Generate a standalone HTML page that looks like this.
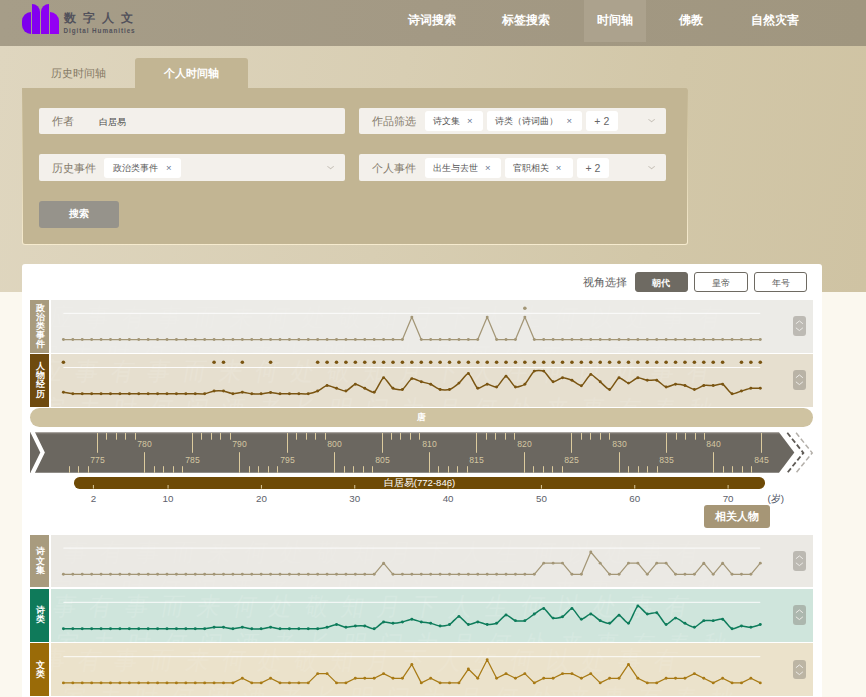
<!DOCTYPE html>
<html><head><meta charset="utf-8">
<style>
*{box-sizing:border-box;margin:0;padding:0}
html,body{width:866px;height:697px;overflow:hidden}
body{position:relative;font-family:"Liberation Sans",sans-serif;background:#fbf8ef}
.abs{position:absolute}
#bgtop{position:absolute;left:0;top:46px;width:866px;height:245.8px;background:linear-gradient(100deg,#dfd6bf 0%,#d8ceb3 45%,#d2c7a8 75%,#cfc3a3 100%)}
#hdr{position:absolute;left:0;top:0;width:866px;height:46px;background:linear-gradient(90deg,#a69d88,#a39984 50%,#a0967f)}
.lg{position:absolute;background:#8600f0}
.nav{position:absolute;top:13px;color:#fff;font-size:12px;font-weight:bold;line-height:14px;white-space:nowrap}
#navact{position:absolute;left:584px;top:0;width:62px;height:42px;background:#aca28d}
.logo-cn{position:absolute;left:63.5px;top:9.9px;font-size:12.3px;font-weight:bold;line-height:16px;color:#52515b;letter-spacing:7px;white-space:nowrap}
.logo-en{position:absolute;left:63.5px;top:27.3px;font-size:6.3px;line-height:8px;color:#52515a;letter-spacing:0.95px;font-weight:bold;white-space:nowrap}
.tab{position:absolute;top:58px;height:30px;font-size:11px;line-height:30px;text-align:center;white-space:nowrap}
#panel{position:absolute;left:22px;top:88px;width:666px;height:157px;background:linear-gradient(180deg,#c2b593 0%,#d9cdaa 40%,#f6ebcf 100%);border-radius:0 3px 3px 3px}
#panel div{position:absolute;left:1px;top:0;right:1px;bottom:1px;background:#c2b593;border-radius:0 2px 2px 2px}
.inp{position:absolute;height:26px;background:#f3f0eb;border-radius:2px}
.lab{position:absolute;font-size:11px;line-height:14px;color:#857b6b;white-space:nowrap}
.tag{position:absolute;height:20px;background:#fff;border-radius:3px;font-size:9.3px;line-height:20px;color:#555;white-space:nowrap}
.tag i{font-style:normal;position:absolute;color:#6a7690;font-size:9.5px;line-height:20px}
.arr{position:absolute;width:5.2px;height:5.2px;border-right:1px solid #c6c1b8;border-bottom:1px solid #c6c1b8;transform:scaleY(0.8) rotate(45deg)}
#card{position:absolute;left:22px;top:264px;width:800px;height:440px;background:#fff;border-radius:3px}
.rl{position:absolute;left:30px;width:19px;color:#fff;font-size:9.2px;line-height:9.1px;font-weight:bold;text-align:center;display:flex;align-items:center;justify-content:center}
.rl span{display:block;margin-left:1px}
.rb{position:absolute;left:51px;width:762px;overflow:hidden}
.cal{position:absolute;white-space:nowrap;font-size:23px;line-height:28px;letter-spacing:13px;color:#fff;opacity:0.14;transform:skewX(-10deg) scaleY(1.1);transform-origin:0 0}
.sw{position:absolute;left:793.1px;width:12.8px;height:19.8px;background:rgba(125,120,110,0.42);border-radius:3px}
.sw svg{display:block}
.btn{position:absolute;top:272px;height:19.6px;border-radius:3px;font-size:9px;font-weight:bold;line-height:20.5px;text-align:center}
svg text.yl{font-size:8.6px;fill:#d3c6a0;text-anchor:middle;font-family:"Liberation Sans",sans-serif}
svg text.al{font-size:9.8px;fill:#5d616b;text-anchor:middle;font-family:"Liberation Sans",sans-serif}
</style></head><body>
<div id="bgtop"></div>
<div id="hdr"></div>
<div class="lg" style="left:22px;top:12px;width:9px;height:22px;border-radius:9px 0 0 9px;background:#7d00ee"></div>
<div class="lg" style="left:31.8px;top:3.9px;width:8.3px;height:30px;border-radius:0 8.3px 0 0;background:#8300f0"></div>
<div class="lg" style="left:40.8px;top:3.9px;width:8.5px;height:30px;border-radius:8.5px 0 0 0;background:#8a00f2"></div>
<div class="lg" style="left:50px;top:12px;width:9px;height:22px;border-radius:0 9px 0 0;background:#9300f4"></div>
<div class="logo-cn">数字人文</div>
<div class="logo-en">Digital Humanities</div>
<div id="navact"></div>
<div class="nav" style="left:407.5px">诗词搜索</div>
<div class="nav" style="left:502.3px">标签搜索</div>
<div class="nav" style="left:596.7px">时间轴</div>
<div class="nav" style="left:679px">佛教</div>
<div class="nav" style="left:750.8px">自然灾害</div>

<div class="tab" style="left:22px;width:113px;color:#867a66">历史时间轴</div>
<div class="tab" style="left:135px;width:113px;background:#c2b593;color:#fff;font-weight:bold;border-radius:3px 3px 0 0">个人时间轴</div>
<div id="panel"><div></div></div>

<div class="inp" style="left:39px;top:108px;width:306px"></div>
<div class="lab" style="left:51.5px;top:114px">作者</div>
<div class="abs" style="left:99.3px;top:114.5px;font-size:8.8px;line-height:14px;color:#4a4a4a">白居易</div>

<div class="inp" style="left:39px;top:154.3px;width:306px;height:26.5px"></div>
<div class="lab" style="left:51.5px;top:160.5px">历史事件</div>
<div class="tag" style="left:103.9px;top:158.2px;width:77px;padding-left:8.7px">政治类事件<i style="left:62px">×</i></div>
<div class="arr" style="left:328px;top:163.8px"></div>

<div class="inp" style="left:359px;top:108px;width:307px"></div>
<div class="lab" style="left:372.3px;top:114px">作品筛选</div>
<div class="tag" style="left:425px;top:111.4px;width:57.7px;padding-left:8px">诗文集<i style="left:42px">×</i></div>
<div class="tag" style="left:487.4px;top:111.4px;width:94.2px;padding-left:8px">诗类（诗词曲）<i style="left:79px">×</i></div>
<div class="tag" style="left:586px;top:111.4px;width:31.6px;text-align:center;font-size:10.5px;color:#666">+ 2</div>
<div class="arr" style="left:649px;top:117.3px"></div>

<div class="inp" style="left:359px;top:154.3px;width:307px;height:26.5px"></div>
<div class="lab" style="left:372.3px;top:160.5px">个人事件</div>
<div class="tag" style="left:425px;top:158.3px;width:75.8px;padding-left:8px">出生与去世<i style="left:60px">×</i></div>
<div class="tag" style="left:504.8px;top:158.3px;width:67.9px;padding-left:8px">官职相关<i style="left:51px">×</i></div>
<div class="tag" style="left:577px;top:158.3px;width:31.7px;text-align:center;font-size:10.5px;color:#666">+ 2</div>
<div class="arr" style="left:649px;top:163.8px"></div>

<div class="abs" style="left:39px;top:201px;width:80px;height:26.7px;background:#96938b;border-radius:3px;color:#fff;font-size:9.5px;font-weight:bold;line-height:26.7px;text-align:center">搜索</div>

<div id="card"></div>
<div class="abs" style="left:583.3px;top:275px;font-size:11px;line-height:14px;color:#5e5e5e;white-space:nowrap">视角选择</div>
<div class="btn" style="left:635px;width:52.7px;background:#6e6a62;color:#fff;border:1px solid #6e6a62">朝代</div>
<div class="btn" style="left:694px;width:53.7px;background:#fff;color:#555;font-weight:normal;border:1px solid #6e6a62">皇帝</div>
<div class="btn" style="left:754px;width:53px;background:#fff;color:#555;font-weight:normal;border:1px solid #6e6a62">年号</div>

<div class="rl" style="top:300.0px;height:52.6px;background:#a89b7e"><span>政<br>治<br>类<br>事<br>件</span></div>
<div class="rb" style="top:300.0px;height:52.6px;background:#ecebe7"><div class="cal" style="opacity:0.06;top:2px;left:2px">应事有事而来何处敬知月下人生何以处事有</div><div class="cal" style="opacity:0.06;top:40px;left:-14px">家去时何闲酒者长明问为月何处来事有春秋</div></div>
<div class="sw" style="top:316.2px"><svg width="13" height="20" viewBox="0 0 13 20"><path d="M2.9 7.75 L6.4 4.95 L9.9 7.75 M2.9 11.8 L6.4 14.6 L9.9 11.8" fill="none" stroke="#eceae6" stroke-width="1"/></svg></div>
<div class="rl" style="top:354.2px;height:52.6px;background:#6e4a0f"><span>人<br>物<br>经<br>历</span></div>
<div class="rb" style="top:354.2px;height:52.6px;background:#e6dfcf"><div class="cal" style="opacity:0.11;top:2px;left:-9px">应事有事而来何处敬知月下人生何以处事有</div><div class="cal" style="opacity:0.11;top:40px;left:-7px">家去时何闲酒者长明问为月何处来事有春秋</div></div>
<div class="sw" style="top:370.4px"><svg width="13" height="20" viewBox="0 0 13 20"><path d="M2.9 7.75 L6.4 4.95 L9.9 7.75 M2.9 11.8 L6.4 14.6 L9.9 11.8" fill="none" stroke="#eceae6" stroke-width="1"/></svg></div>
<div class="rl" style="top:534.8px;height:52.6px;background:#a89b7e"><span>诗<br>文<br>集</span></div>
<div class="rb" style="top:534.8px;height:52.6px;background:#ebe9e4"><div class="cal" style="opacity:0.06;top:2px;left:-20px">应事有事而来何处敬知月下人生何以处事有</div><div class="cal" style="opacity:0.06;top:40px;left:0px">家去时何闲酒者长明问为月何处来事有春秋</div></div>
<div class="sw" style="top:551.0px"><svg width="13" height="20" viewBox="0 0 13 20"><path d="M2.9 7.75 L6.4 4.95 L9.9 7.75 M2.9 11.8 L6.4 14.6 L9.9 11.8" fill="none" stroke="#eceae6" stroke-width="1"/></svg></div>
<div class="rl" style="top:589.0px;height:52.6px;background:#0f7a5a"><span>诗<br>类</span></div>
<div class="rb" style="top:589.0px;height:52.6px;background:#cfe5dc"><div class="cal" style="opacity:0.12;top:2px;left:-31px">应事有事而来何处敬知月下人生何以处事有</div><div class="cal" style="opacity:0.12;top:40px;left:7px">家去时何闲酒者长明问为月何处来事有春秋</div></div>
<div class="sw" style="top:605.2px"><svg width="13" height="20" viewBox="0 0 13 20"><path d="M2.9 7.75 L6.4 4.95 L9.9 7.75 M2.9 11.8 L6.4 14.6 L9.9 11.8" fill="none" stroke="#eceae6" stroke-width="1"/></svg></div>
<div class="rl" style="top:643.4px;height:52.6px;background:#9a6b08"><span>文<br>类</span></div>
<div class="rb" style="top:643.4px;height:52.6px;background:#ebe2cb"><div class="cal" style="opacity:0.09;top:2px;left:-42px">应事有事而来何处敬知月下人生何以处事有</div><div class="cal" style="opacity:0.09;top:40px;left:14px">家去时何闲酒者长明问为月何处来事有春秋</div></div>
<div class="sw" style="top:659.6px"><svg width="13" height="20" viewBox="0 0 13 20"><path d="M2.9 7.75 L6.4 4.95 L9.9 7.75 M2.9 11.8 L6.4 14.6 L9.9 11.8" fill="none" stroke="#eceae6" stroke-width="1"/></svg></div>

<div class="abs" style="left:30px;top:408px;width:782.8px;height:18.8px;background:#cfc3a1;border-radius:9.4px;color:#fff;font-size:9px;font-weight:bold;line-height:18.8px;text-align:center;padding-left:0px">唐</div>
<div class="abs" style="left:74.1px;top:477.3px;width:690.5px;height:11.3px;background:#6e4a06;border-radius:5.65px;color:#fff;font-size:9.6px;line-height:11.3px;white-space:nowrap"><span style="position:absolute;left:309.6px;top:0">白居易(772-846)</span></div>

<svg class="abs" style="left:0;top:0" width="866" height="697" viewBox="0 0 866 697">
<defs><linearGradient id="rg" x1="0" y1="0" x2="0" y2="1"><stop offset="0" stop-color="#8c8780"/><stop offset="0.06" stop-color="#6b6760"/><stop offset="1" stop-color="#6b6760"/></linearGradient></defs>
<path d="M30,432.3 L779,432.3 L794.3,452.5 L779,472.7 L30,472.7 Z" fill="url(#rg)"/>
<path d="M32.3,431.5 L42.6,452.5 L32.3,473.5" fill="none" stroke="#fff" stroke-width="4.1"/>
<path d="M787.3,432.8 L803.4,452.9 L787.3,472.8" fill="none" stroke="#5e5a55" stroke-width="1.8" stroke-dasharray="5,2.6"/>
<path d="M796.1,432.8 L812.2,452.9 L796.1,472.8" fill="none" stroke="#b3afa9" stroke-width="1.5" stroke-dasharray="5,2.6"/>
<line x1="69.50" y1="466.2" x2="69.50" y2="472.7" stroke="#dccb9e" stroke-width="1"/>
<line x1="78.50" y1="466.2" x2="78.50" y2="472.7" stroke="#dccb9e" stroke-width="1"/>
<line x1="88.50" y1="466.2" x2="88.50" y2="472.7" stroke="#dccb9e" stroke-width="1"/>
<line x1="97.50" y1="433" x2="97.50" y2="452.8" stroke="#dccb9e" stroke-width="1"/>
<text x="97.50" y="463.2" class="yl">775</text>
<line x1="106.50" y1="433" x2="106.50" y2="439.7" stroke="#dccb9e" stroke-width="1"/>
<line x1="116.50" y1="433" x2="116.50" y2="439.7" stroke="#dccb9e" stroke-width="1"/>
<line x1="125.50" y1="433" x2="125.50" y2="439.7" stroke="#dccb9e" stroke-width="1"/>
<line x1="135.50" y1="433" x2="135.50" y2="439.7" stroke="#dccb9e" stroke-width="1"/>
<line x1="144.50" y1="452.2" x2="144.50" y2="472.7" stroke="#dccb9e" stroke-width="1"/>
<text x="144.50" y="447.3" class="yl">780</text>
<line x1="154.50" y1="466.2" x2="154.50" y2="472.7" stroke="#dccb9e" stroke-width="1"/>
<line x1="163.50" y1="466.2" x2="163.50" y2="472.7" stroke="#dccb9e" stroke-width="1"/>
<line x1="173.50" y1="466.2" x2="173.50" y2="472.7" stroke="#dccb9e" stroke-width="1"/>
<line x1="182.50" y1="466.2" x2="182.50" y2="472.7" stroke="#dccb9e" stroke-width="1"/>
<line x1="192.50" y1="433" x2="192.50" y2="452.8" stroke="#dccb9e" stroke-width="1"/>
<text x="192.50" y="463.2" class="yl">785</text>
<line x1="201.50" y1="433" x2="201.50" y2="439.7" stroke="#dccb9e" stroke-width="1"/>
<line x1="211.50" y1="433" x2="211.50" y2="439.7" stroke="#dccb9e" stroke-width="1"/>
<line x1="220.50" y1="433" x2="220.50" y2="439.7" stroke="#dccb9e" stroke-width="1"/>
<line x1="230.50" y1="433" x2="230.50" y2="439.7" stroke="#dccb9e" stroke-width="1"/>
<line x1="239.50" y1="452.2" x2="239.50" y2="472.7" stroke="#dccb9e" stroke-width="1"/>
<text x="239.50" y="447.3" class="yl">790</text>
<line x1="249.50" y1="466.2" x2="249.50" y2="472.7" stroke="#dccb9e" stroke-width="1"/>
<line x1="258.50" y1="466.2" x2="258.50" y2="472.7" stroke="#dccb9e" stroke-width="1"/>
<line x1="268.50" y1="466.2" x2="268.50" y2="472.7" stroke="#dccb9e" stroke-width="1"/>
<line x1="277.50" y1="466.2" x2="277.50" y2="472.7" stroke="#dccb9e" stroke-width="1"/>
<line x1="287.50" y1="433" x2="287.50" y2="452.8" stroke="#dccb9e" stroke-width="1"/>
<text x="287.50" y="463.2" class="yl">795</text>
<line x1="296.50" y1="433" x2="296.50" y2="439.7" stroke="#dccb9e" stroke-width="1"/>
<line x1="306.50" y1="433" x2="306.50" y2="439.7" stroke="#dccb9e" stroke-width="1"/>
<line x1="315.50" y1="433" x2="315.50" y2="439.7" stroke="#dccb9e" stroke-width="1"/>
<line x1="325.50" y1="433" x2="325.50" y2="439.7" stroke="#dccb9e" stroke-width="1"/>
<line x1="334.50" y1="452.2" x2="334.50" y2="472.7" stroke="#dccb9e" stroke-width="1"/>
<text x="334.50" y="447.3" class="yl">800</text>
<line x1="344.50" y1="466.2" x2="344.50" y2="472.7" stroke="#dccb9e" stroke-width="1"/>
<line x1="353.50" y1="466.2" x2="353.50" y2="472.7" stroke="#dccb9e" stroke-width="1"/>
<line x1="363.50" y1="466.2" x2="363.50" y2="472.7" stroke="#dccb9e" stroke-width="1"/>
<line x1="372.50" y1="466.2" x2="372.50" y2="472.7" stroke="#dccb9e" stroke-width="1"/>
<line x1="382.50" y1="433" x2="382.50" y2="452.8" stroke="#dccb9e" stroke-width="1"/>
<text x="382.50" y="463.2" class="yl">805</text>
<line x1="391.50" y1="433" x2="391.50" y2="439.7" stroke="#dccb9e" stroke-width="1"/>
<line x1="400.50" y1="433" x2="400.50" y2="439.7" stroke="#dccb9e" stroke-width="1"/>
<line x1="410.50" y1="433" x2="410.50" y2="439.7" stroke="#dccb9e" stroke-width="1"/>
<line x1="419.50" y1="433" x2="419.50" y2="439.7" stroke="#dccb9e" stroke-width="1"/>
<line x1="429.50" y1="452.2" x2="429.50" y2="472.7" stroke="#dccb9e" stroke-width="1"/>
<text x="429.50" y="447.3" class="yl">810</text>
<line x1="438.50" y1="466.2" x2="438.50" y2="472.7" stroke="#dccb9e" stroke-width="1"/>
<line x1="448.50" y1="466.2" x2="448.50" y2="472.7" stroke="#dccb9e" stroke-width="1"/>
<line x1="457.50" y1="466.2" x2="457.50" y2="472.7" stroke="#dccb9e" stroke-width="1"/>
<line x1="467.50" y1="466.2" x2="467.50" y2="472.7" stroke="#dccb9e" stroke-width="1"/>
<line x1="476.50" y1="433" x2="476.50" y2="452.8" stroke="#dccb9e" stroke-width="1"/>
<text x="476.50" y="463.2" class="yl">815</text>
<line x1="486.50" y1="433" x2="486.50" y2="439.7" stroke="#dccb9e" stroke-width="1"/>
<line x1="495.50" y1="433" x2="495.50" y2="439.7" stroke="#dccb9e" stroke-width="1"/>
<line x1="505.50" y1="433" x2="505.50" y2="439.7" stroke="#dccb9e" stroke-width="1"/>
<line x1="514.50" y1="433" x2="514.50" y2="439.7" stroke="#dccb9e" stroke-width="1"/>
<line x1="524.50" y1="452.2" x2="524.50" y2="472.7" stroke="#dccb9e" stroke-width="1"/>
<text x="524.50" y="447.3" class="yl">820</text>
<line x1="533.50" y1="466.2" x2="533.50" y2="472.7" stroke="#dccb9e" stroke-width="1"/>
<line x1="543.50" y1="466.2" x2="543.50" y2="472.7" stroke="#dccb9e" stroke-width="1"/>
<line x1="552.50" y1="466.2" x2="552.50" y2="472.7" stroke="#dccb9e" stroke-width="1"/>
<line x1="562.50" y1="466.2" x2="562.50" y2="472.7" stroke="#dccb9e" stroke-width="1"/>
<line x1="571.50" y1="433" x2="571.50" y2="452.8" stroke="#dccb9e" stroke-width="1"/>
<text x="571.50" y="463.2" class="yl">825</text>
<line x1="581.50" y1="433" x2="581.50" y2="439.7" stroke="#dccb9e" stroke-width="1"/>
<line x1="590.50" y1="433" x2="590.50" y2="439.7" stroke="#dccb9e" stroke-width="1"/>
<line x1="600.50" y1="433" x2="600.50" y2="439.7" stroke="#dccb9e" stroke-width="1"/>
<line x1="609.50" y1="433" x2="609.50" y2="439.7" stroke="#dccb9e" stroke-width="1"/>
<line x1="619.50" y1="452.2" x2="619.50" y2="472.7" stroke="#dccb9e" stroke-width="1"/>
<text x="619.50" y="447.3" class="yl">830</text>
<line x1="628.50" y1="466.2" x2="628.50" y2="472.7" stroke="#dccb9e" stroke-width="1"/>
<line x1="638.50" y1="466.2" x2="638.50" y2="472.7" stroke="#dccb9e" stroke-width="1"/>
<line x1="647.50" y1="466.2" x2="647.50" y2="472.7" stroke="#dccb9e" stroke-width="1"/>
<line x1="657.50" y1="466.2" x2="657.50" y2="472.7" stroke="#dccb9e" stroke-width="1"/>
<line x1="666.50" y1="433" x2="666.50" y2="452.8" stroke="#dccb9e" stroke-width="1"/>
<text x="666.50" y="463.2" class="yl">835</text>
<line x1="676.50" y1="433" x2="676.50" y2="439.7" stroke="#dccb9e" stroke-width="1"/>
<line x1="685.50" y1="433" x2="685.50" y2="439.7" stroke="#dccb9e" stroke-width="1"/>
<line x1="695.50" y1="433" x2="695.50" y2="439.7" stroke="#dccb9e" stroke-width="1"/>
<line x1="704.50" y1="433" x2="704.50" y2="439.7" stroke="#dccb9e" stroke-width="1"/>
<line x1="713.50" y1="452.2" x2="713.50" y2="472.7" stroke="#dccb9e" stroke-width="1"/>
<text x="713.50" y="447.3" class="yl">840</text>
<line x1="723.50" y1="466.2" x2="723.50" y2="472.7" stroke="#dccb9e" stroke-width="1"/>
<line x1="732.50" y1="466.2" x2="732.50" y2="472.7" stroke="#dccb9e" stroke-width="1"/>
<line x1="742.50" y1="466.2" x2="742.50" y2="472.7" stroke="#dccb9e" stroke-width="1"/>
<line x1="751.50" y1="466.2" x2="751.50" y2="472.7" stroke="#dccb9e" stroke-width="1"/>
<line x1="761.50" y1="433" x2="761.50" y2="452.8" stroke="#dccb9e" stroke-width="1"/>
<text x="761.50" y="463.2" class="yl">845</text>
<line x1="93.40" y1="485" x2="93.40" y2="488.6" stroke="#dccb9e" stroke-width="1"/>
<text x="93.40" y="502" class="al">2</text>
<line x1="168.07" y1="485" x2="168.07" y2="488.6" stroke="#dccb9e" stroke-width="1"/>
<text x="168.07" y="502" class="al">10</text>
<line x1="261.41" y1="485" x2="261.41" y2="488.6" stroke="#dccb9e" stroke-width="1"/>
<text x="261.41" y="502" class="al">20</text>
<line x1="354.75" y1="485" x2="354.75" y2="488.6" stroke="#dccb9e" stroke-width="1"/>
<text x="354.75" y="502" class="al">30</text>
<line x1="448.09" y1="485" x2="448.09" y2="488.6" stroke="#dccb9e" stroke-width="1"/>
<text x="448.09" y="502" class="al">40</text>
<line x1="541.42" y1="485" x2="541.42" y2="488.6" stroke="#dccb9e" stroke-width="1"/>
<text x="541.42" y="502" class="al">50</text>
<line x1="634.76" y1="485" x2="634.76" y2="488.6" stroke="#dccb9e" stroke-width="1"/>
<text x="634.76" y="502" class="al">60</text>
<line x1="728.10" y1="485" x2="728.10" y2="488.6" stroke="#dccb9e" stroke-width="1"/>
<text x="728.10" y="502" class="al">70</text>
<line x1="63.4" y1="313.3" x2="760.3" y2="313.3" stroke="#fff" stroke-width="1" opacity="0.9"/>
<path d="M63.40,339.50 L72.82,339.50 L82.24,339.50 L91.65,339.50 L101.07,339.50 L110.49,339.50 L119.91,339.50 L129.32,339.50 L138.74,339.50 L148.16,339.50 L157.58,339.50 L166.99,339.50 L176.41,339.50 L185.83,339.50 L195.25,339.50 L204.66,339.50 L214.08,339.50 L223.50,339.50 L232.92,339.50 L242.33,339.50 L251.75,339.50 L261.17,339.50 L270.59,339.50 L280.00,339.50 L289.42,339.50 L298.84,339.50 L308.26,339.50 L317.67,339.50 L327.09,339.50 L336.51,339.50 L345.93,339.50 L355.34,339.50 L364.76,339.50 L374.18,339.50 L383.60,339.50 L393.01,339.50 L402.43,339.50 L411.85,317.10 L421.27,339.50 L430.69,339.50 L440.10,339.50 L449.52,339.50 L458.94,339.50 L468.36,339.50 L477.77,339.50 L487.19,317.10 L496.61,339.50 L506.03,339.50 L515.44,339.50 L524.86,317.10 L534.28,339.50 L543.70,339.50 L553.11,339.50 L562.53,339.50 L571.95,339.50 L581.37,339.50 L590.78,339.50 L600.20,339.50 L609.62,339.50 L619.04,339.50 L628.45,339.50 L637.87,339.50 L647.29,339.50 L656.71,339.50 L666.12,339.50 L675.54,339.50 L684.96,339.50 L694.38,339.50 L703.79,339.50 L713.21,339.50 L722.63,339.50 L732.05,339.50 L741.46,339.50 L750.88,339.50 L760.30,339.50" fill="none" stroke="#a39676" stroke-width="1.25" stroke-linejoin="round"/>
<circle cx="63.40" cy="339.50" r="1.45" fill="#a39676"/>
<circle cx="72.82" cy="339.50" r="1.45" fill="#a39676"/>
<circle cx="82.24" cy="339.50" r="1.45" fill="#a39676"/>
<circle cx="91.65" cy="339.50" r="1.45" fill="#a39676"/>
<circle cx="101.07" cy="339.50" r="1.45" fill="#a39676"/>
<circle cx="110.49" cy="339.50" r="1.45" fill="#a39676"/>
<circle cx="119.91" cy="339.50" r="1.45" fill="#a39676"/>
<circle cx="129.32" cy="339.50" r="1.45" fill="#a39676"/>
<circle cx="138.74" cy="339.50" r="1.45" fill="#a39676"/>
<circle cx="148.16" cy="339.50" r="1.45" fill="#a39676"/>
<circle cx="157.58" cy="339.50" r="1.45" fill="#a39676"/>
<circle cx="166.99" cy="339.50" r="1.45" fill="#a39676"/>
<circle cx="176.41" cy="339.50" r="1.45" fill="#a39676"/>
<circle cx="185.83" cy="339.50" r="1.45" fill="#a39676"/>
<circle cx="195.25" cy="339.50" r="1.45" fill="#a39676"/>
<circle cx="204.66" cy="339.50" r="1.45" fill="#a39676"/>
<circle cx="214.08" cy="339.50" r="1.45" fill="#a39676"/>
<circle cx="223.50" cy="339.50" r="1.45" fill="#a39676"/>
<circle cx="232.92" cy="339.50" r="1.45" fill="#a39676"/>
<circle cx="242.33" cy="339.50" r="1.45" fill="#a39676"/>
<circle cx="251.75" cy="339.50" r="1.45" fill="#a39676"/>
<circle cx="261.17" cy="339.50" r="1.45" fill="#a39676"/>
<circle cx="270.59" cy="339.50" r="1.45" fill="#a39676"/>
<circle cx="280.00" cy="339.50" r="1.45" fill="#a39676"/>
<circle cx="289.42" cy="339.50" r="1.45" fill="#a39676"/>
<circle cx="298.84" cy="339.50" r="1.45" fill="#a39676"/>
<circle cx="308.26" cy="339.50" r="1.45" fill="#a39676"/>
<circle cx="317.67" cy="339.50" r="1.45" fill="#a39676"/>
<circle cx="327.09" cy="339.50" r="1.45" fill="#a39676"/>
<circle cx="336.51" cy="339.50" r="1.45" fill="#a39676"/>
<circle cx="345.93" cy="339.50" r="1.45" fill="#a39676"/>
<circle cx="355.34" cy="339.50" r="1.45" fill="#a39676"/>
<circle cx="364.76" cy="339.50" r="1.45" fill="#a39676"/>
<circle cx="374.18" cy="339.50" r="1.45" fill="#a39676"/>
<circle cx="383.60" cy="339.50" r="1.45" fill="#a39676"/>
<circle cx="393.01" cy="339.50" r="1.45" fill="#a39676"/>
<circle cx="402.43" cy="339.50" r="1.45" fill="#a39676"/>
<circle cx="411.85" cy="317.10" r="1.45" fill="#a39676"/>
<circle cx="421.27" cy="339.50" r="1.45" fill="#a39676"/>
<circle cx="430.69" cy="339.50" r="1.45" fill="#a39676"/>
<circle cx="440.10" cy="339.50" r="1.45" fill="#a39676"/>
<circle cx="449.52" cy="339.50" r="1.45" fill="#a39676"/>
<circle cx="458.94" cy="339.50" r="1.45" fill="#a39676"/>
<circle cx="468.36" cy="339.50" r="1.45" fill="#a39676"/>
<circle cx="477.77" cy="339.50" r="1.45" fill="#a39676"/>
<circle cx="487.19" cy="317.10" r="1.45" fill="#a39676"/>
<circle cx="496.61" cy="339.50" r="1.45" fill="#a39676"/>
<circle cx="506.03" cy="339.50" r="1.45" fill="#a39676"/>
<circle cx="515.44" cy="339.50" r="1.45" fill="#a39676"/>
<circle cx="524.86" cy="317.10" r="1.45" fill="#a39676"/>
<circle cx="534.28" cy="339.50" r="1.45" fill="#a39676"/>
<circle cx="543.70" cy="339.50" r="1.45" fill="#a39676"/>
<circle cx="553.11" cy="339.50" r="1.45" fill="#a39676"/>
<circle cx="562.53" cy="339.50" r="1.45" fill="#a39676"/>
<circle cx="571.95" cy="339.50" r="1.45" fill="#a39676"/>
<circle cx="581.37" cy="339.50" r="1.45" fill="#a39676"/>
<circle cx="590.78" cy="339.50" r="1.45" fill="#a39676"/>
<circle cx="600.20" cy="339.50" r="1.45" fill="#a39676"/>
<circle cx="609.62" cy="339.50" r="1.45" fill="#a39676"/>
<circle cx="619.04" cy="339.50" r="1.45" fill="#a39676"/>
<circle cx="628.45" cy="339.50" r="1.45" fill="#a39676"/>
<circle cx="637.87" cy="339.50" r="1.45" fill="#a39676"/>
<circle cx="647.29" cy="339.50" r="1.45" fill="#a39676"/>
<circle cx="656.71" cy="339.50" r="1.45" fill="#a39676"/>
<circle cx="666.12" cy="339.50" r="1.45" fill="#a39676"/>
<circle cx="675.54" cy="339.50" r="1.45" fill="#a39676"/>
<circle cx="684.96" cy="339.50" r="1.45" fill="#a39676"/>
<circle cx="694.38" cy="339.50" r="1.45" fill="#a39676"/>
<circle cx="703.79" cy="339.50" r="1.45" fill="#a39676"/>
<circle cx="713.21" cy="339.50" r="1.45" fill="#a39676"/>
<circle cx="722.63" cy="339.50" r="1.45" fill="#a39676"/>
<circle cx="732.05" cy="339.50" r="1.45" fill="#a39676"/>
<circle cx="741.46" cy="339.50" r="1.45" fill="#a39676"/>
<circle cx="750.88" cy="339.50" r="1.45" fill="#a39676"/>
<circle cx="760.30" cy="339.50" r="1.45" fill="#a39676"/>
<line x1="63.4" y1="367.5" x2="760.3" y2="367.5" stroke="#fff" stroke-width="1" opacity="0.9"/>
<path d="M63.40,392.30 C63.40,392.30 70.92,393.56 72.82,393.70 C74.69,393.84 80.35,393.70 82.24,393.70 C84.12,393.70 89.77,393.70 91.65,393.70 C93.54,393.70 99.19,393.70 101.07,393.70 C102.95,393.70 108.60,393.70 110.49,393.70 C112.37,393.70 118.02,393.70 119.91,393.70 C121.79,393.70 127.44,393.70 129.32,393.70 C131.21,393.70 136.86,393.70 138.74,393.70 C140.62,393.70 146.27,393.70 148.16,393.70 C150.04,393.70 155.69,393.70 157.58,393.70 C159.46,393.70 165.11,393.70 166.99,393.70 C168.88,393.70 174.53,393.70 176.41,393.70 C178.29,393.70 183.94,393.70 185.83,393.70 C187.71,393.70 193.36,393.69 195.25,393.70 C197.13,393.71 202.82,394.06 204.66,393.80 C206.59,393.52 212.16,391.29 214.08,391.00 C215.92,390.73 221.66,390.73 223.50,391.00 C225.42,391.29 231.00,393.67 232.92,393.80 C234.77,393.93 240.45,392.30 242.33,392.30 C244.22,392.30 249.86,393.65 251.75,393.80 C253.62,393.95 259.29,393.93 261.17,393.80 C263.06,393.67 268.70,392.50 270.59,392.50 C272.47,392.50 278.11,393.67 280.00,393.80 C281.88,393.93 287.54,393.80 289.42,393.80 C291.31,393.80 296.96,393.80 298.84,393.80 C300.72,393.80 306.41,394.07 308.26,393.80 C310.18,393.51 315.89,391.79 317.67,391.00 C319.66,390.13 325.11,385.78 327.09,385.50 C328.88,385.24 334.62,387.75 336.51,388.30 C338.39,388.85 344.20,391.38 345.93,391.00 C347.97,390.56 353.35,384.49 355.34,384.20 C357.11,383.95 362.88,387.49 364.76,388.30 C366.64,389.11 372.78,393.09 374.18,392.30 C376.55,390.97 381.52,378.14 383.60,377.70 C385.29,377.34 390.76,386.89 393.01,388.30 C394.53,389.25 400.94,390.27 402.43,389.50 C404.70,388.33 409.62,379.51 411.85,378.60 C413.39,377.97 419.36,381.23 421.27,381.80 C423.13,382.35 428.90,383.47 430.69,384.20 C432.67,385.01 438.09,388.93 440.10,389.50 C441.86,389.99 447.82,390.08 449.52,389.50 C451.58,388.80 457.21,384.57 458.94,383.10 C460.98,381.37 466.72,373.05 468.36,373.50 C470.49,374.09 475.40,386.95 477.77,388.30 C479.16,389.09 485.27,384.33 487.19,384.20 C489.03,384.07 495.08,387.65 496.61,387.00 C498.84,386.05 504.14,376.20 506.03,376.20 C507.91,376.20 513.21,386.05 515.44,387.00 C516.98,387.65 523.44,385.40 524.86,384.20 C527.20,382.22 531.90,372.75 534.28,371.10 C535.67,370.13 542.20,370.25 543.70,371.10 C545.96,372.39 550.92,381.03 553.11,381.80 C554.69,382.35 560.60,377.85 562.53,377.70 C564.37,377.55 570.16,379.54 571.95,380.30 C573.93,381.14 579.77,386.20 581.37,385.70 C583.53,385.02 588.71,374.83 590.78,374.40 C592.47,374.05 598.33,380.30 600.20,381.80 C602.10,383.32 607.94,389.87 609.62,389.50 C611.71,389.05 616.85,378.44 619.04,377.70 C620.61,377.16 626.57,383.10 628.45,383.10 C630.34,383.10 635.89,377.99 637.87,377.70 C639.66,377.43 645.37,380.04 647.29,380.30 C649.14,380.56 655.02,379.70 656.71,380.30 C658.78,381.04 664.09,386.58 666.12,387.00 C667.86,387.36 673.63,384.35 675.54,384.20 C677.39,384.05 683.15,384.99 684.96,385.50 C686.91,386.05 692.49,389.50 694.38,389.50 C696.26,389.50 701.83,385.92 703.79,385.50 C705.60,385.12 711.34,385.63 713.21,385.50 C715.10,385.37 721.07,383.51 722.63,384.20 C724.84,385.17 729.87,393.01 732.05,393.80 C733.64,394.37 739.58,391.55 741.46,391.00 C743.35,390.45 748.96,388.58 750.88,388.30 C752.73,388.04 760.30,388.30 760.30,388.30" fill="none" stroke="#7a5512" stroke-width="1.5" stroke-linejoin="round"/>
<circle cx="63.40" cy="392.30" r="1.45" fill="#7a5512"/>
<circle cx="72.82" cy="393.70" r="1.45" fill="#7a5512"/>
<circle cx="82.24" cy="393.70" r="1.45" fill="#7a5512"/>
<circle cx="91.65" cy="393.70" r="1.45" fill="#7a5512"/>
<circle cx="101.07" cy="393.70" r="1.45" fill="#7a5512"/>
<circle cx="110.49" cy="393.70" r="1.45" fill="#7a5512"/>
<circle cx="119.91" cy="393.70" r="1.45" fill="#7a5512"/>
<circle cx="129.32" cy="393.70" r="1.45" fill="#7a5512"/>
<circle cx="138.74" cy="393.70" r="1.45" fill="#7a5512"/>
<circle cx="148.16" cy="393.70" r="1.45" fill="#7a5512"/>
<circle cx="157.58" cy="393.70" r="1.45" fill="#7a5512"/>
<circle cx="166.99" cy="393.70" r="1.45" fill="#7a5512"/>
<circle cx="176.41" cy="393.70" r="1.45" fill="#7a5512"/>
<circle cx="185.83" cy="393.70" r="1.45" fill="#7a5512"/>
<circle cx="195.25" cy="393.70" r="1.45" fill="#7a5512"/>
<circle cx="204.66" cy="393.80" r="1.45" fill="#7a5512"/>
<circle cx="214.08" cy="391.00" r="1.45" fill="#7a5512"/>
<circle cx="223.50" cy="391.00" r="1.45" fill="#7a5512"/>
<circle cx="232.92" cy="393.80" r="1.45" fill="#7a5512"/>
<circle cx="242.33" cy="392.30" r="1.45" fill="#7a5512"/>
<circle cx="251.75" cy="393.80" r="1.45" fill="#7a5512"/>
<circle cx="261.17" cy="393.80" r="1.45" fill="#7a5512"/>
<circle cx="270.59" cy="392.50" r="1.45" fill="#7a5512"/>
<circle cx="280.00" cy="393.80" r="1.45" fill="#7a5512"/>
<circle cx="289.42" cy="393.80" r="1.45" fill="#7a5512"/>
<circle cx="298.84" cy="393.80" r="1.45" fill="#7a5512"/>
<circle cx="308.26" cy="393.80" r="1.45" fill="#7a5512"/>
<circle cx="317.67" cy="391.00" r="1.45" fill="#7a5512"/>
<circle cx="327.09" cy="385.50" r="1.45" fill="#7a5512"/>
<circle cx="336.51" cy="388.30" r="1.45" fill="#7a5512"/>
<circle cx="345.93" cy="391.00" r="1.45" fill="#7a5512"/>
<circle cx="355.34" cy="384.20" r="1.45" fill="#7a5512"/>
<circle cx="364.76" cy="388.30" r="1.45" fill="#7a5512"/>
<circle cx="374.18" cy="392.30" r="1.45" fill="#7a5512"/>
<circle cx="383.60" cy="377.70" r="1.45" fill="#7a5512"/>
<circle cx="393.01" cy="388.30" r="1.45" fill="#7a5512"/>
<circle cx="402.43" cy="389.50" r="1.45" fill="#7a5512"/>
<circle cx="411.85" cy="378.60" r="1.45" fill="#7a5512"/>
<circle cx="421.27" cy="381.80" r="1.45" fill="#7a5512"/>
<circle cx="430.69" cy="384.20" r="1.45" fill="#7a5512"/>
<circle cx="440.10" cy="389.50" r="1.45" fill="#7a5512"/>
<circle cx="449.52" cy="389.50" r="1.45" fill="#7a5512"/>
<circle cx="458.94" cy="383.10" r="1.45" fill="#7a5512"/>
<circle cx="468.36" cy="373.50" r="1.45" fill="#7a5512"/>
<circle cx="477.77" cy="388.30" r="1.45" fill="#7a5512"/>
<circle cx="487.19" cy="384.20" r="1.45" fill="#7a5512"/>
<circle cx="496.61" cy="387.00" r="1.45" fill="#7a5512"/>
<circle cx="506.03" cy="376.20" r="1.45" fill="#7a5512"/>
<circle cx="515.44" cy="387.00" r="1.45" fill="#7a5512"/>
<circle cx="524.86" cy="384.20" r="1.45" fill="#7a5512"/>
<circle cx="534.28" cy="371.10" r="1.45" fill="#7a5512"/>
<circle cx="543.70" cy="371.10" r="1.45" fill="#7a5512"/>
<circle cx="553.11" cy="381.80" r="1.45" fill="#7a5512"/>
<circle cx="562.53" cy="377.70" r="1.45" fill="#7a5512"/>
<circle cx="571.95" cy="380.30" r="1.45" fill="#7a5512"/>
<circle cx="581.37" cy="385.70" r="1.45" fill="#7a5512"/>
<circle cx="590.78" cy="374.40" r="1.45" fill="#7a5512"/>
<circle cx="600.20" cy="381.80" r="1.45" fill="#7a5512"/>
<circle cx="609.62" cy="389.50" r="1.45" fill="#7a5512"/>
<circle cx="619.04" cy="377.70" r="1.45" fill="#7a5512"/>
<circle cx="628.45" cy="383.10" r="1.45" fill="#7a5512"/>
<circle cx="637.87" cy="377.70" r="1.45" fill="#7a5512"/>
<circle cx="647.29" cy="380.30" r="1.45" fill="#7a5512"/>
<circle cx="656.71" cy="380.30" r="1.45" fill="#7a5512"/>
<circle cx="666.12" cy="387.00" r="1.45" fill="#7a5512"/>
<circle cx="675.54" cy="384.20" r="1.45" fill="#7a5512"/>
<circle cx="684.96" cy="385.50" r="1.45" fill="#7a5512"/>
<circle cx="694.38" cy="389.50" r="1.45" fill="#7a5512"/>
<circle cx="703.79" cy="385.50" r="1.45" fill="#7a5512"/>
<circle cx="713.21" cy="385.50" r="1.45" fill="#7a5512"/>
<circle cx="722.63" cy="384.20" r="1.45" fill="#7a5512"/>
<circle cx="732.05" cy="393.80" r="1.45" fill="#7a5512"/>
<circle cx="741.46" cy="391.00" r="1.45" fill="#7a5512"/>
<circle cx="750.88" cy="388.30" r="1.45" fill="#7a5512"/>
<circle cx="760.30" cy="388.30" r="1.45" fill="#7a5512"/>
<line x1="63.4" y1="548.1" x2="760.3" y2="548.1" stroke="#fff" stroke-width="1" opacity="0.9"/>
<path d="M63.40,574.30 L72.82,574.30 L82.24,574.30 L91.65,574.30 L101.07,574.30 L110.49,574.30 L119.91,574.30 L129.32,574.30 L138.74,574.30 L148.16,574.30 L157.58,574.30 L166.99,574.30 L176.41,574.30 L185.83,574.30 L195.25,574.30 L204.66,574.30 L214.08,574.30 L223.50,574.30 L232.92,574.30 L242.33,574.30 L251.75,574.30 L261.17,574.30 L270.59,574.30 L280.00,574.30 L289.42,574.30 L298.84,574.30 L308.26,574.30 L317.67,574.30 L327.09,574.30 L336.51,574.30 L345.93,574.30 L355.34,574.30 L364.76,574.30 L374.18,574.30 L383.60,563.15 L393.01,574.30 L402.43,574.30 L411.85,574.30 L421.27,574.30 L430.69,574.30 L440.10,574.30 L449.52,574.30 L458.94,574.30 L468.36,574.30 L477.77,574.30 L487.19,574.30 L496.61,574.30 L506.03,574.30 L515.44,574.30 L524.86,574.30 L534.28,574.30 L543.70,563.15 L553.11,563.15 L562.53,563.15 L571.95,574.30 L581.37,574.30 L590.78,552.00 L600.20,563.15 L609.62,574.30 L619.04,574.30 L628.45,563.15 L637.87,563.15 L647.29,574.30 L656.71,563.15 L666.12,563.15 L675.54,574.30 L684.96,574.30 L694.38,574.30 L703.79,563.15 L713.21,574.30 L722.63,563.15 L732.05,574.30 L741.46,574.30 L750.88,574.30 L760.30,563.15" fill="none" stroke="#a39676" stroke-width="1.25" stroke-linejoin="round"/>
<circle cx="63.40" cy="574.30" r="1.45" fill="#a39676"/>
<circle cx="72.82" cy="574.30" r="1.45" fill="#a39676"/>
<circle cx="82.24" cy="574.30" r="1.45" fill="#a39676"/>
<circle cx="91.65" cy="574.30" r="1.45" fill="#a39676"/>
<circle cx="101.07" cy="574.30" r="1.45" fill="#a39676"/>
<circle cx="110.49" cy="574.30" r="1.45" fill="#a39676"/>
<circle cx="119.91" cy="574.30" r="1.45" fill="#a39676"/>
<circle cx="129.32" cy="574.30" r="1.45" fill="#a39676"/>
<circle cx="138.74" cy="574.30" r="1.45" fill="#a39676"/>
<circle cx="148.16" cy="574.30" r="1.45" fill="#a39676"/>
<circle cx="157.58" cy="574.30" r="1.45" fill="#a39676"/>
<circle cx="166.99" cy="574.30" r="1.45" fill="#a39676"/>
<circle cx="176.41" cy="574.30" r="1.45" fill="#a39676"/>
<circle cx="185.83" cy="574.30" r="1.45" fill="#a39676"/>
<circle cx="195.25" cy="574.30" r="1.45" fill="#a39676"/>
<circle cx="204.66" cy="574.30" r="1.45" fill="#a39676"/>
<circle cx="214.08" cy="574.30" r="1.45" fill="#a39676"/>
<circle cx="223.50" cy="574.30" r="1.45" fill="#a39676"/>
<circle cx="232.92" cy="574.30" r="1.45" fill="#a39676"/>
<circle cx="242.33" cy="574.30" r="1.45" fill="#a39676"/>
<circle cx="251.75" cy="574.30" r="1.45" fill="#a39676"/>
<circle cx="261.17" cy="574.30" r="1.45" fill="#a39676"/>
<circle cx="270.59" cy="574.30" r="1.45" fill="#a39676"/>
<circle cx="280.00" cy="574.30" r="1.45" fill="#a39676"/>
<circle cx="289.42" cy="574.30" r="1.45" fill="#a39676"/>
<circle cx="298.84" cy="574.30" r="1.45" fill="#a39676"/>
<circle cx="308.26" cy="574.30" r="1.45" fill="#a39676"/>
<circle cx="317.67" cy="574.30" r="1.45" fill="#a39676"/>
<circle cx="327.09" cy="574.30" r="1.45" fill="#a39676"/>
<circle cx="336.51" cy="574.30" r="1.45" fill="#a39676"/>
<circle cx="345.93" cy="574.30" r="1.45" fill="#a39676"/>
<circle cx="355.34" cy="574.30" r="1.45" fill="#a39676"/>
<circle cx="364.76" cy="574.30" r="1.45" fill="#a39676"/>
<circle cx="374.18" cy="574.30" r="1.45" fill="#a39676"/>
<circle cx="383.60" cy="563.15" r="1.45" fill="#a39676"/>
<circle cx="393.01" cy="574.30" r="1.45" fill="#a39676"/>
<circle cx="402.43" cy="574.30" r="1.45" fill="#a39676"/>
<circle cx="411.85" cy="574.30" r="1.45" fill="#a39676"/>
<circle cx="421.27" cy="574.30" r="1.45" fill="#a39676"/>
<circle cx="430.69" cy="574.30" r="1.45" fill="#a39676"/>
<circle cx="440.10" cy="574.30" r="1.45" fill="#a39676"/>
<circle cx="449.52" cy="574.30" r="1.45" fill="#a39676"/>
<circle cx="458.94" cy="574.30" r="1.45" fill="#a39676"/>
<circle cx="468.36" cy="574.30" r="1.45" fill="#a39676"/>
<circle cx="477.77" cy="574.30" r="1.45" fill="#a39676"/>
<circle cx="487.19" cy="574.30" r="1.45" fill="#a39676"/>
<circle cx="496.61" cy="574.30" r="1.45" fill="#a39676"/>
<circle cx="506.03" cy="574.30" r="1.45" fill="#a39676"/>
<circle cx="515.44" cy="574.30" r="1.45" fill="#a39676"/>
<circle cx="524.86" cy="574.30" r="1.45" fill="#a39676"/>
<circle cx="534.28" cy="574.30" r="1.45" fill="#a39676"/>
<circle cx="543.70" cy="563.15" r="1.45" fill="#a39676"/>
<circle cx="553.11" cy="563.15" r="1.45" fill="#a39676"/>
<circle cx="562.53" cy="563.15" r="1.45" fill="#a39676"/>
<circle cx="571.95" cy="574.30" r="1.45" fill="#a39676"/>
<circle cx="581.37" cy="574.30" r="1.45" fill="#a39676"/>
<circle cx="590.78" cy="552.00" r="1.45" fill="#a39676"/>
<circle cx="600.20" cy="563.15" r="1.45" fill="#a39676"/>
<circle cx="609.62" cy="574.30" r="1.45" fill="#a39676"/>
<circle cx="619.04" cy="574.30" r="1.45" fill="#a39676"/>
<circle cx="628.45" cy="563.15" r="1.45" fill="#a39676"/>
<circle cx="637.87" cy="563.15" r="1.45" fill="#a39676"/>
<circle cx="647.29" cy="574.30" r="1.45" fill="#a39676"/>
<circle cx="656.71" cy="563.15" r="1.45" fill="#a39676"/>
<circle cx="666.12" cy="563.15" r="1.45" fill="#a39676"/>
<circle cx="675.54" cy="574.30" r="1.45" fill="#a39676"/>
<circle cx="684.96" cy="574.30" r="1.45" fill="#a39676"/>
<circle cx="694.38" cy="574.30" r="1.45" fill="#a39676"/>
<circle cx="703.79" cy="563.15" r="1.45" fill="#a39676"/>
<circle cx="713.21" cy="574.30" r="1.45" fill="#a39676"/>
<circle cx="722.63" cy="563.15" r="1.45" fill="#a39676"/>
<circle cx="732.05" cy="574.30" r="1.45" fill="#a39676"/>
<circle cx="741.46" cy="574.30" r="1.45" fill="#a39676"/>
<circle cx="750.88" cy="574.30" r="1.45" fill="#a39676"/>
<circle cx="760.30" cy="563.15" r="1.45" fill="#a39676"/>
<line x1="63.4" y1="602.3" x2="760.3" y2="602.3" stroke="#fff" stroke-width="1" opacity="0.9"/>
<path d="M63.40,628.80 C63.40,628.80 70.93,628.80 72.82,628.80 C74.70,628.80 80.35,628.80 82.24,628.80 C84.12,628.80 89.77,628.80 91.65,628.80 C93.54,628.80 99.19,628.80 101.07,628.80 C102.95,628.80 108.60,628.80 110.49,628.80 C112.37,628.80 118.02,628.80 119.91,628.80 C121.79,628.80 127.44,628.80 129.32,628.80 C131.21,628.80 136.86,628.80 138.74,628.80 C140.62,628.80 146.27,628.80 148.16,628.80 C150.04,628.80 155.69,628.80 157.58,628.80 C159.46,628.80 165.11,628.80 166.99,628.80 C168.88,628.80 174.53,628.80 176.41,628.80 C178.29,628.80 183.94,628.80 185.83,628.80 C187.71,628.80 193.36,628.80 195.25,628.80 C197.13,628.80 202.79,628.95 204.66,628.80 C206.56,628.65 212.19,627.47 214.08,627.32 C215.95,627.17 221.63,627.17 223.50,627.32 C225.39,627.47 231.03,628.80 232.92,628.80 C234.80,628.80 240.45,627.32 242.33,627.32 C244.22,627.32 249.86,628.65 251.75,628.80 C253.62,628.95 259.30,628.95 261.17,628.80 C263.06,628.65 268.70,627.32 270.59,627.32 C272.47,627.32 278.11,628.65 280.00,628.80 C281.88,628.95 287.54,628.80 289.42,628.80 C291.31,628.80 296.96,628.80 298.84,628.80 C300.72,628.80 306.37,628.80 308.26,628.80 C310.14,628.80 315.80,628.95 317.67,628.80 C319.57,628.65 325.24,627.74 327.09,627.32 C329.00,626.89 334.63,624.55 336.51,624.55 C338.39,624.55 344.01,627.17 345.93,627.32 C347.78,627.47 353.45,626.16 355.34,626.03 C357.22,625.90 362.92,625.76 364.76,626.03 C366.68,626.31 372.46,629.17 374.18,628.80 C376.22,628.36 381.52,622.57 383.60,621.96 C385.29,621.46 391.13,623.26 393.01,623.26 C394.90,623.26 400.58,622.36 402.43,621.96 C404.35,621.55 409.97,619.19 411.85,619.19 C413.73,619.19 419.35,621.55 421.27,621.96 C423.12,622.36 428.83,622.86 430.69,623.26 C432.60,623.67 438.19,625.90 440.10,626.03 C441.96,626.16 447.89,625.38 449.52,624.55 C451.65,623.46 457.05,616.42 458.94,616.42 C460.82,616.42 466.25,623.93 468.36,624.55 C470.01,625.04 475.89,621.96 477.77,621.96 C479.66,621.96 485.28,624.42 487.19,624.55 C489.05,624.68 494.99,624.08 496.61,623.26 C498.75,622.16 504.02,615.22 506.03,614.94 C507.79,614.70 513.41,620.05 515.44,620.67 C517.18,621.20 523.17,621.27 524.86,620.67 C526.93,619.94 532.34,615.27 534.28,614.02 C536.11,612.83 542.01,608.11 543.70,608.48 C545.77,608.92 550.91,617.11 553.11,618.08 C554.67,618.77 560.91,617.62 562.53,616.79 C564.68,615.70 570.18,608.25 571.95,608.48 C573.95,608.73 579.22,618.56 581.37,619.19 C582.98,619.67 588.97,613.88 590.78,614.02 C592.73,614.17 598.16,619.67 600.20,620.67 C601.93,621.52 607.95,623.73 609.62,623.26 C611.72,622.66 617.15,615.31 619.04,615.31 C620.92,615.31 627.00,623.97 628.45,623.26 C630.77,622.12 635.56,607.21 637.87,606.07 C639.33,605.36 645.16,613.27 647.29,614.02 C648.93,614.60 655.25,611.91 656.71,612.73 C659.02,614.02 663.98,623.94 666.12,624.55 C667.75,625.01 673.60,618.22 675.54,618.08 C677.37,617.96 683.03,622.31 684.96,623.26 C686.80,624.16 692.60,627.56 694.38,627.32 C696.37,627.05 701.72,621.40 703.79,620.67 C705.49,620.07 711.34,620.82 713.21,620.67 C715.11,620.52 721.07,618.52 722.63,619.19 C724.83,620.14 729.87,628.01 732.05,628.80 C733.64,629.38 739.55,626.18 741.46,626.03 C743.32,625.88 749.03,627.47 750.88,627.32 C752.80,627.17 760.30,624.55 760.30,624.55" fill="none" stroke="#0e7c5b" stroke-width="1.5" stroke-linejoin="round"/>
<circle cx="63.40" cy="628.80" r="1.45" fill="#0e7c5b"/>
<circle cx="72.82" cy="628.80" r="1.45" fill="#0e7c5b"/>
<circle cx="82.24" cy="628.80" r="1.45" fill="#0e7c5b"/>
<circle cx="91.65" cy="628.80" r="1.45" fill="#0e7c5b"/>
<circle cx="101.07" cy="628.80" r="1.45" fill="#0e7c5b"/>
<circle cx="110.49" cy="628.80" r="1.45" fill="#0e7c5b"/>
<circle cx="119.91" cy="628.80" r="1.45" fill="#0e7c5b"/>
<circle cx="129.32" cy="628.80" r="1.45" fill="#0e7c5b"/>
<circle cx="138.74" cy="628.80" r="1.45" fill="#0e7c5b"/>
<circle cx="148.16" cy="628.80" r="1.45" fill="#0e7c5b"/>
<circle cx="157.58" cy="628.80" r="1.45" fill="#0e7c5b"/>
<circle cx="166.99" cy="628.80" r="1.45" fill="#0e7c5b"/>
<circle cx="176.41" cy="628.80" r="1.45" fill="#0e7c5b"/>
<circle cx="185.83" cy="628.80" r="1.45" fill="#0e7c5b"/>
<circle cx="195.25" cy="628.80" r="1.45" fill="#0e7c5b"/>
<circle cx="204.66" cy="628.80" r="1.45" fill="#0e7c5b"/>
<circle cx="214.08" cy="627.32" r="1.45" fill="#0e7c5b"/>
<circle cx="223.50" cy="627.32" r="1.45" fill="#0e7c5b"/>
<circle cx="232.92" cy="628.80" r="1.45" fill="#0e7c5b"/>
<circle cx="242.33" cy="627.32" r="1.45" fill="#0e7c5b"/>
<circle cx="251.75" cy="628.80" r="1.45" fill="#0e7c5b"/>
<circle cx="261.17" cy="628.80" r="1.45" fill="#0e7c5b"/>
<circle cx="270.59" cy="627.32" r="1.45" fill="#0e7c5b"/>
<circle cx="280.00" cy="628.80" r="1.45" fill="#0e7c5b"/>
<circle cx="289.42" cy="628.80" r="1.45" fill="#0e7c5b"/>
<circle cx="298.84" cy="628.80" r="1.45" fill="#0e7c5b"/>
<circle cx="308.26" cy="628.80" r="1.45" fill="#0e7c5b"/>
<circle cx="317.67" cy="628.80" r="1.45" fill="#0e7c5b"/>
<circle cx="327.09" cy="627.32" r="1.45" fill="#0e7c5b"/>
<circle cx="336.51" cy="624.55" r="1.45" fill="#0e7c5b"/>
<circle cx="345.93" cy="627.32" r="1.45" fill="#0e7c5b"/>
<circle cx="355.34" cy="626.03" r="1.45" fill="#0e7c5b"/>
<circle cx="364.76" cy="626.03" r="1.45" fill="#0e7c5b"/>
<circle cx="374.18" cy="628.80" r="1.45" fill="#0e7c5b"/>
<circle cx="383.60" cy="621.96" r="1.45" fill="#0e7c5b"/>
<circle cx="393.01" cy="623.26" r="1.45" fill="#0e7c5b"/>
<circle cx="402.43" cy="621.96" r="1.45" fill="#0e7c5b"/>
<circle cx="411.85" cy="619.19" r="1.45" fill="#0e7c5b"/>
<circle cx="421.27" cy="621.96" r="1.45" fill="#0e7c5b"/>
<circle cx="430.69" cy="623.26" r="1.45" fill="#0e7c5b"/>
<circle cx="440.10" cy="626.03" r="1.45" fill="#0e7c5b"/>
<circle cx="449.52" cy="624.55" r="1.45" fill="#0e7c5b"/>
<circle cx="458.94" cy="616.42" r="1.45" fill="#0e7c5b"/>
<circle cx="468.36" cy="624.55" r="1.45" fill="#0e7c5b"/>
<circle cx="477.77" cy="621.96" r="1.45" fill="#0e7c5b"/>
<circle cx="487.19" cy="624.55" r="1.45" fill="#0e7c5b"/>
<circle cx="496.61" cy="623.26" r="1.45" fill="#0e7c5b"/>
<circle cx="506.03" cy="614.94" r="1.45" fill="#0e7c5b"/>
<circle cx="515.44" cy="620.67" r="1.45" fill="#0e7c5b"/>
<circle cx="524.86" cy="620.67" r="1.45" fill="#0e7c5b"/>
<circle cx="534.28" cy="614.02" r="1.45" fill="#0e7c5b"/>
<circle cx="543.70" cy="608.48" r="1.45" fill="#0e7c5b"/>
<circle cx="553.11" cy="618.08" r="1.45" fill="#0e7c5b"/>
<circle cx="562.53" cy="616.79" r="1.45" fill="#0e7c5b"/>
<circle cx="571.95" cy="608.48" r="1.45" fill="#0e7c5b"/>
<circle cx="581.37" cy="619.19" r="1.45" fill="#0e7c5b"/>
<circle cx="590.78" cy="614.02" r="1.45" fill="#0e7c5b"/>
<circle cx="600.20" cy="620.67" r="1.45" fill="#0e7c5b"/>
<circle cx="609.62" cy="623.26" r="1.45" fill="#0e7c5b"/>
<circle cx="619.04" cy="615.31" r="1.45" fill="#0e7c5b"/>
<circle cx="628.45" cy="623.26" r="1.45" fill="#0e7c5b"/>
<circle cx="637.87" cy="606.07" r="1.45" fill="#0e7c5b"/>
<circle cx="647.29" cy="614.02" r="1.45" fill="#0e7c5b"/>
<circle cx="656.71" cy="612.73" r="1.45" fill="#0e7c5b"/>
<circle cx="666.12" cy="624.55" r="1.45" fill="#0e7c5b"/>
<circle cx="675.54" cy="618.08" r="1.45" fill="#0e7c5b"/>
<circle cx="684.96" cy="623.26" r="1.45" fill="#0e7c5b"/>
<circle cx="694.38" cy="627.32" r="1.45" fill="#0e7c5b"/>
<circle cx="703.79" cy="620.67" r="1.45" fill="#0e7c5b"/>
<circle cx="713.21" cy="620.67" r="1.45" fill="#0e7c5b"/>
<circle cx="722.63" cy="619.19" r="1.45" fill="#0e7c5b"/>
<circle cx="732.05" cy="628.80" r="1.45" fill="#0e7c5b"/>
<circle cx="741.46" cy="626.03" r="1.45" fill="#0e7c5b"/>
<circle cx="750.88" cy="627.32" r="1.45" fill="#0e7c5b"/>
<circle cx="760.30" cy="624.55" r="1.45" fill="#0e7c5b"/>
<line x1="63.4" y1="656.7" x2="760.3" y2="656.7" stroke="#fff" stroke-width="1" opacity="0.9"/>
<path d="M63.40,682.90 L72.82,682.90 L82.24,682.90 L91.65,682.90 L101.07,682.90 L110.49,682.90 L119.91,682.90 L129.32,682.90 L138.74,682.90 L148.16,682.90 L157.58,682.90 L166.99,682.90 L176.41,682.90 L185.83,682.90 L195.25,682.90 L204.66,682.90 L214.08,682.90 L223.50,682.90 L232.92,682.90 L242.33,678.28 L251.75,682.90 L261.17,682.90 L270.59,678.28 L280.00,682.90 L289.42,682.90 L298.84,682.90 L308.26,682.90 L317.67,673.66 L327.09,673.66 L336.51,682.90 L345.93,682.90 L355.34,678.28 L364.76,678.28 L374.18,678.28 L383.60,673.66 L393.01,678.28 L402.43,678.28 L411.85,664.42 L421.27,682.90 L430.69,678.28 L440.10,682.90 L449.52,682.90 L458.94,682.90 L468.36,669.04 L477.77,678.28 L487.19,659.80 L496.61,678.28 L506.03,673.66 L515.44,678.28 L524.86,673.66 L534.28,682.90 L543.70,678.28 L553.11,678.28 L562.53,673.66 L571.95,673.66 L581.37,678.28 L590.78,673.66 L600.20,682.90 L609.62,678.28 L619.04,678.28 L628.45,664.42 L637.87,678.28 L647.29,682.90 L656.71,682.90 L666.12,678.28 L675.54,678.28 L684.96,678.28 L694.38,673.66 L703.79,678.28 L713.21,682.90 L722.63,678.28 L732.05,682.90 L741.46,682.90 L750.88,678.28 L760.30,682.90" fill="none" stroke="#a87a15" stroke-width="1.25" stroke-linejoin="round"/>
<circle cx="63.40" cy="682.90" r="1.45" fill="#a87a15"/>
<circle cx="72.82" cy="682.90" r="1.45" fill="#a87a15"/>
<circle cx="82.24" cy="682.90" r="1.45" fill="#a87a15"/>
<circle cx="91.65" cy="682.90" r="1.45" fill="#a87a15"/>
<circle cx="101.07" cy="682.90" r="1.45" fill="#a87a15"/>
<circle cx="110.49" cy="682.90" r="1.45" fill="#a87a15"/>
<circle cx="119.91" cy="682.90" r="1.45" fill="#a87a15"/>
<circle cx="129.32" cy="682.90" r="1.45" fill="#a87a15"/>
<circle cx="138.74" cy="682.90" r="1.45" fill="#a87a15"/>
<circle cx="148.16" cy="682.90" r="1.45" fill="#a87a15"/>
<circle cx="157.58" cy="682.90" r="1.45" fill="#a87a15"/>
<circle cx="166.99" cy="682.90" r="1.45" fill="#a87a15"/>
<circle cx="176.41" cy="682.90" r="1.45" fill="#a87a15"/>
<circle cx="185.83" cy="682.90" r="1.45" fill="#a87a15"/>
<circle cx="195.25" cy="682.90" r="1.45" fill="#a87a15"/>
<circle cx="204.66" cy="682.90" r="1.45" fill="#a87a15"/>
<circle cx="214.08" cy="682.90" r="1.45" fill="#a87a15"/>
<circle cx="223.50" cy="682.90" r="1.45" fill="#a87a15"/>
<circle cx="232.92" cy="682.90" r="1.45" fill="#a87a15"/>
<circle cx="242.33" cy="678.28" r="1.45" fill="#a87a15"/>
<circle cx="251.75" cy="682.90" r="1.45" fill="#a87a15"/>
<circle cx="261.17" cy="682.90" r="1.45" fill="#a87a15"/>
<circle cx="270.59" cy="678.28" r="1.45" fill="#a87a15"/>
<circle cx="280.00" cy="682.90" r="1.45" fill="#a87a15"/>
<circle cx="289.42" cy="682.90" r="1.45" fill="#a87a15"/>
<circle cx="298.84" cy="682.90" r="1.45" fill="#a87a15"/>
<circle cx="308.26" cy="682.90" r="1.45" fill="#a87a15"/>
<circle cx="317.67" cy="673.66" r="1.45" fill="#a87a15"/>
<circle cx="327.09" cy="673.66" r="1.45" fill="#a87a15"/>
<circle cx="336.51" cy="682.90" r="1.45" fill="#a87a15"/>
<circle cx="345.93" cy="682.90" r="1.45" fill="#a87a15"/>
<circle cx="355.34" cy="678.28" r="1.45" fill="#a87a15"/>
<circle cx="364.76" cy="678.28" r="1.45" fill="#a87a15"/>
<circle cx="374.18" cy="678.28" r="1.45" fill="#a87a15"/>
<circle cx="383.60" cy="673.66" r="1.45" fill="#a87a15"/>
<circle cx="393.01" cy="678.28" r="1.45" fill="#a87a15"/>
<circle cx="402.43" cy="678.28" r="1.45" fill="#a87a15"/>
<circle cx="411.85" cy="664.42" r="1.45" fill="#a87a15"/>
<circle cx="421.27" cy="682.90" r="1.45" fill="#a87a15"/>
<circle cx="430.69" cy="678.28" r="1.45" fill="#a87a15"/>
<circle cx="440.10" cy="682.90" r="1.45" fill="#a87a15"/>
<circle cx="449.52" cy="682.90" r="1.45" fill="#a87a15"/>
<circle cx="458.94" cy="682.90" r="1.45" fill="#a87a15"/>
<circle cx="468.36" cy="669.04" r="1.45" fill="#a87a15"/>
<circle cx="477.77" cy="678.28" r="1.45" fill="#a87a15"/>
<circle cx="487.19" cy="659.80" r="1.45" fill="#a87a15"/>
<circle cx="496.61" cy="678.28" r="1.45" fill="#a87a15"/>
<circle cx="506.03" cy="673.66" r="1.45" fill="#a87a15"/>
<circle cx="515.44" cy="678.28" r="1.45" fill="#a87a15"/>
<circle cx="524.86" cy="673.66" r="1.45" fill="#a87a15"/>
<circle cx="534.28" cy="682.90" r="1.45" fill="#a87a15"/>
<circle cx="543.70" cy="678.28" r="1.45" fill="#a87a15"/>
<circle cx="553.11" cy="678.28" r="1.45" fill="#a87a15"/>
<circle cx="562.53" cy="673.66" r="1.45" fill="#a87a15"/>
<circle cx="571.95" cy="673.66" r="1.45" fill="#a87a15"/>
<circle cx="581.37" cy="678.28" r="1.45" fill="#a87a15"/>
<circle cx="590.78" cy="673.66" r="1.45" fill="#a87a15"/>
<circle cx="600.20" cy="682.90" r="1.45" fill="#a87a15"/>
<circle cx="609.62" cy="678.28" r="1.45" fill="#a87a15"/>
<circle cx="619.04" cy="678.28" r="1.45" fill="#a87a15"/>
<circle cx="628.45" cy="664.42" r="1.45" fill="#a87a15"/>
<circle cx="637.87" cy="678.28" r="1.45" fill="#a87a15"/>
<circle cx="647.29" cy="682.90" r="1.45" fill="#a87a15"/>
<circle cx="656.71" cy="682.90" r="1.45" fill="#a87a15"/>
<circle cx="666.12" cy="678.28" r="1.45" fill="#a87a15"/>
<circle cx="675.54" cy="678.28" r="1.45" fill="#a87a15"/>
<circle cx="684.96" cy="678.28" r="1.45" fill="#a87a15"/>
<circle cx="694.38" cy="673.66" r="1.45" fill="#a87a15"/>
<circle cx="703.79" cy="678.28" r="1.45" fill="#a87a15"/>
<circle cx="713.21" cy="682.90" r="1.45" fill="#a87a15"/>
<circle cx="722.63" cy="678.28" r="1.45" fill="#a87a15"/>
<circle cx="732.05" cy="682.90" r="1.45" fill="#a87a15"/>
<circle cx="741.46" cy="682.90" r="1.45" fill="#a87a15"/>
<circle cx="750.88" cy="678.28" r="1.45" fill="#a87a15"/>
<circle cx="760.30" cy="682.90" r="1.45" fill="#a87a15"/>
<circle cx="524.86" cy="308.3" r="1.8" fill="#a39676"/>
<circle cx="63.40" cy="362.3" r="1.8" fill="#7a5512"/>
<circle cx="214.08" cy="362.3" r="1.8" fill="#7a5512"/>
<circle cx="223.50" cy="362.3" r="1.8" fill="#7a5512"/>
<circle cx="242.33" cy="362.3" r="1.8" fill="#7a5512"/>
<circle cx="270.59" cy="362.3" r="1.8" fill="#7a5512"/>
<circle cx="317.67" cy="362.3" r="1.8" fill="#7a5512"/>
<circle cx="327.09" cy="362.3" r="1.8" fill="#7a5512"/>
<circle cx="336.51" cy="362.3" r="1.8" fill="#7a5512"/>
<circle cx="345.93" cy="362.3" r="1.8" fill="#7a5512"/>
<circle cx="355.34" cy="362.3" r="1.8" fill="#7a5512"/>
<circle cx="364.76" cy="362.3" r="1.8" fill="#7a5512"/>
<circle cx="374.18" cy="362.3" r="1.8" fill="#7a5512"/>
<circle cx="383.60" cy="362.3" r="1.8" fill="#7a5512"/>
<circle cx="393.01" cy="362.3" r="1.8" fill="#7a5512"/>
<circle cx="402.43" cy="362.3" r="1.8" fill="#7a5512"/>
<circle cx="411.85" cy="362.3" r="1.8" fill="#7a5512"/>
<circle cx="421.27" cy="362.3" r="1.8" fill="#7a5512"/>
<circle cx="430.69" cy="362.3" r="1.8" fill="#7a5512"/>
<circle cx="440.10" cy="362.3" r="1.8" fill="#7a5512"/>
<circle cx="449.52" cy="362.3" r="1.8" fill="#7a5512"/>
<circle cx="458.94" cy="362.3" r="1.8" fill="#7a5512"/>
<circle cx="468.36" cy="362.3" r="1.8" fill="#7a5512"/>
<circle cx="477.77" cy="362.3" r="1.8" fill="#7a5512"/>
<circle cx="487.19" cy="362.3" r="1.8" fill="#7a5512"/>
<circle cx="496.61" cy="362.3" r="1.8" fill="#7a5512"/>
<circle cx="506.03" cy="362.3" r="1.8" fill="#7a5512"/>
<circle cx="515.44" cy="362.3" r="1.8" fill="#7a5512"/>
<circle cx="524.86" cy="362.3" r="1.8" fill="#7a5512"/>
<circle cx="534.28" cy="362.3" r="1.8" fill="#7a5512"/>
<circle cx="543.70" cy="362.3" r="1.8" fill="#7a5512"/>
<circle cx="553.11" cy="362.3" r="1.8" fill="#7a5512"/>
<circle cx="562.53" cy="362.3" r="1.8" fill="#7a5512"/>
<circle cx="571.95" cy="362.3" r="1.8" fill="#7a5512"/>
<circle cx="581.37" cy="362.3" r="1.8" fill="#7a5512"/>
<circle cx="590.78" cy="362.3" r="1.8" fill="#7a5512"/>
<circle cx="600.20" cy="362.3" r="1.8" fill="#7a5512"/>
<circle cx="609.62" cy="362.3" r="1.8" fill="#7a5512"/>
<circle cx="619.04" cy="362.3" r="1.8" fill="#7a5512"/>
<circle cx="628.45" cy="362.3" r="1.8" fill="#7a5512"/>
<circle cx="637.87" cy="362.3" r="1.8" fill="#7a5512"/>
<circle cx="647.29" cy="362.3" r="1.8" fill="#7a5512"/>
<circle cx="656.71" cy="362.3" r="1.8" fill="#7a5512"/>
<circle cx="666.12" cy="362.3" r="1.8" fill="#7a5512"/>
<circle cx="675.54" cy="362.3" r="1.8" fill="#7a5512"/>
<circle cx="684.96" cy="362.3" r="1.8" fill="#7a5512"/>
<circle cx="694.38" cy="362.3" r="1.8" fill="#7a5512"/>
<circle cx="703.79" cy="362.3" r="1.8" fill="#7a5512"/>
<circle cx="713.21" cy="362.3" r="1.8" fill="#7a5512"/>
<circle cx="722.63" cy="362.3" r="1.8" fill="#7a5512"/>
<circle cx="741.46" cy="362.3" r="1.8" fill="#7a5512"/>
<circle cx="750.88" cy="362.3" r="1.8" fill="#7a5512"/>
<circle cx="760.30" cy="362.3" r="1.8" fill="#7a5512"/>
</svg>

<div class="abs" style="left:767.5px;top:491.5px;font-size:9.8px;line-height:14px;color:#4f5566;white-space:nowrap">(岁)</div>
<div class="abs" style="left:704.2px;top:505.1px;width:65.6px;height:22.7px;background:#a69676;border-radius:3px;color:#fff;font-size:11px;font-weight:bold;line-height:22.7px;text-align:center">相关人物</div>
</body></html>
